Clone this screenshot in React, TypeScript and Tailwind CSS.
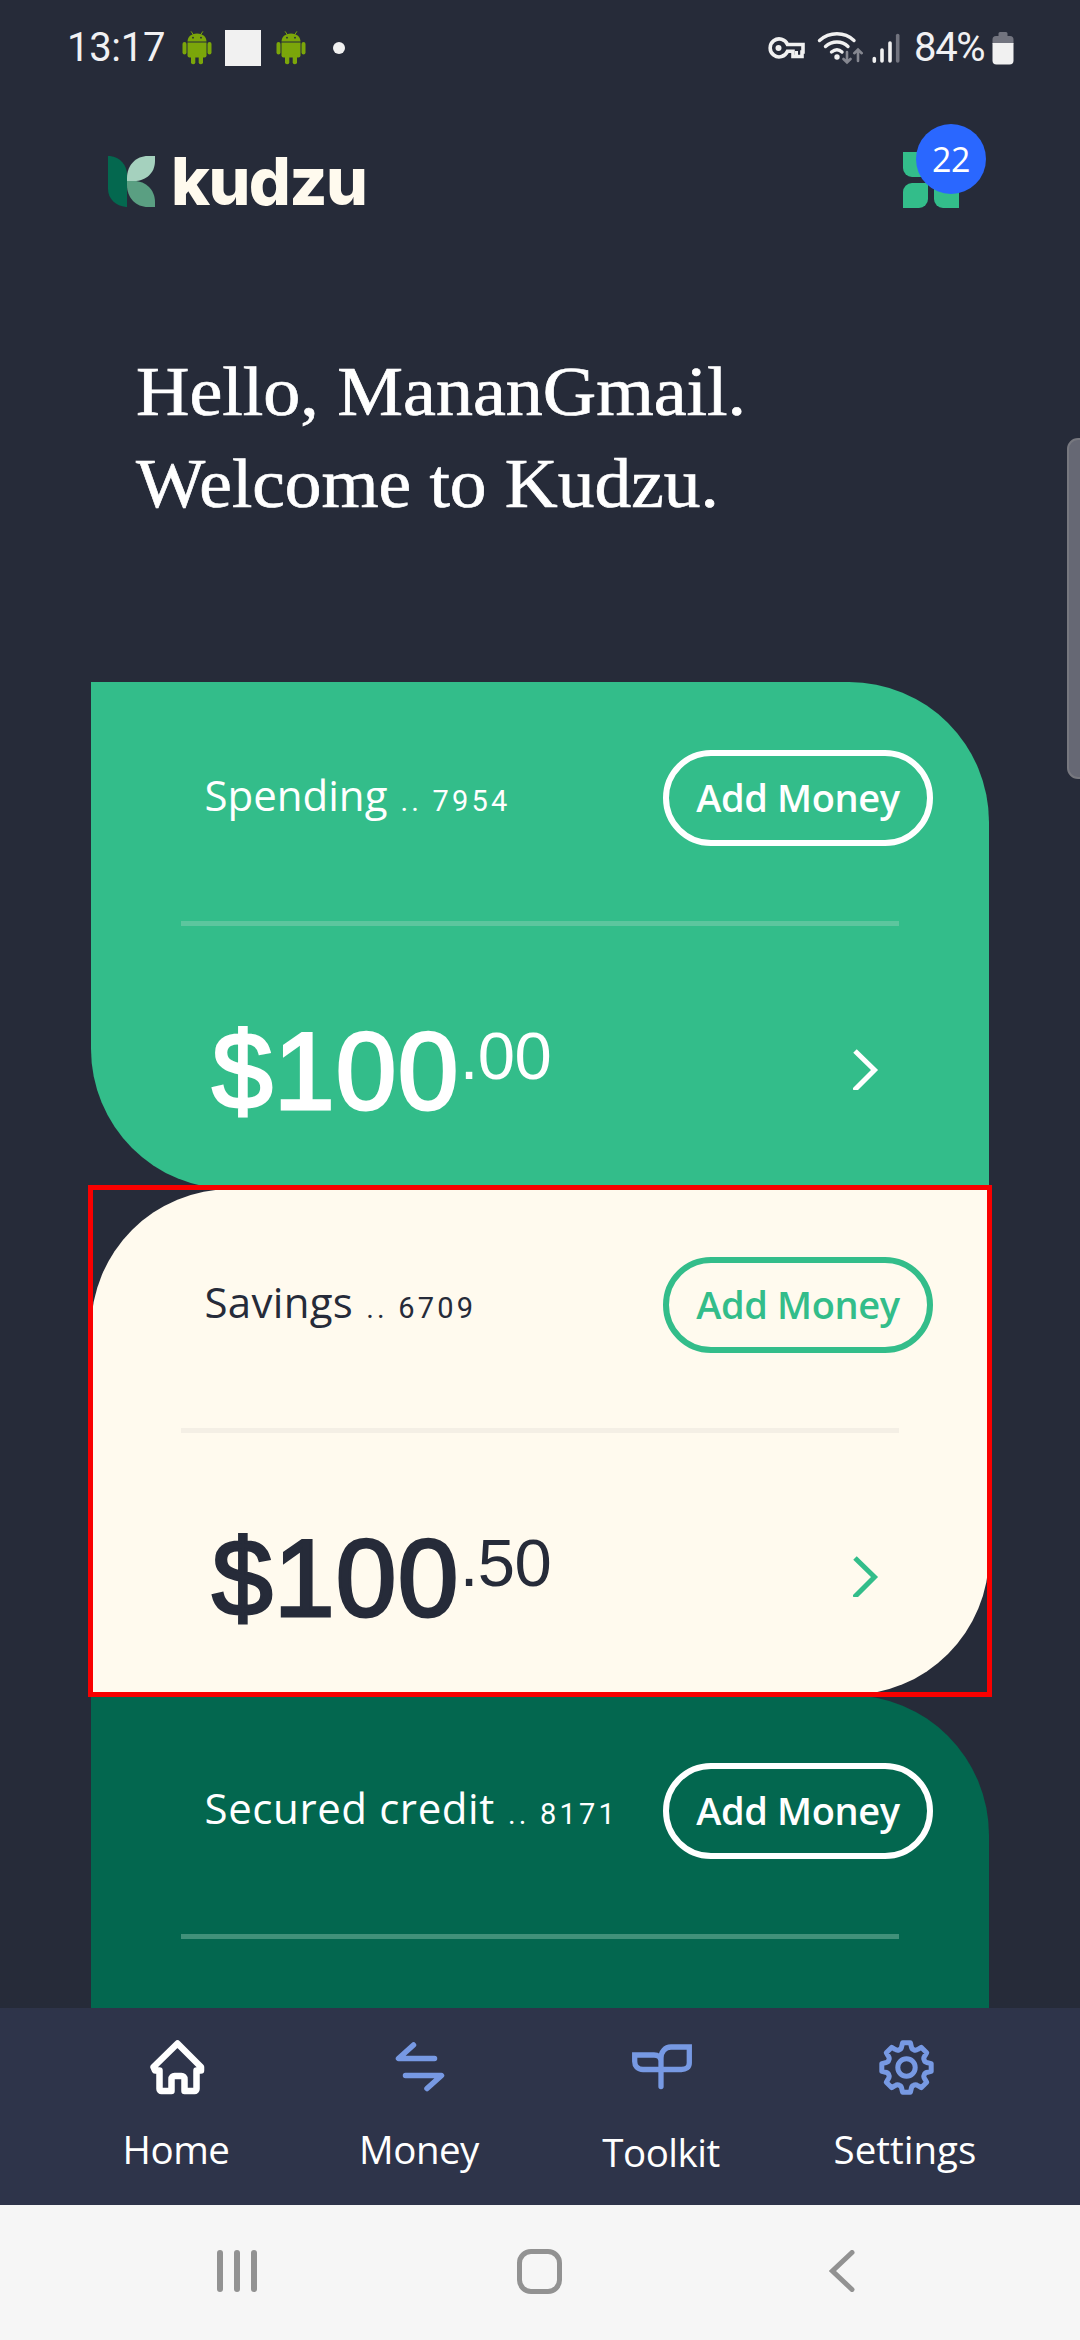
import type { ReactNode } from "react";

const sans = "font-['Open_Sans','Noto_Sans',sans-serif]";

function Android() {
  return (
    <svg width="30" height="34" viewBox="0 0 30 34" fill="#7ba60a">
      <path d="M5.5 10.5C5.5 6 9 2.4 15 2.4s9.500 3.600 9.500 8.100z" />
      <path d="M9.300.7l2 3M20.700.7l-2 3" stroke="#7ba60a" strokeWidth="1" strokeLinecap="round" />
      <circle cx="11" cy="6.700" r="0.900" fill="#262b39" />
      <circle cx="19" cy="6.700" r="0.900" fill="#262b39" />
      <rect x="0.500" y="11" width="4" height="12.500" rx="2" />
      <rect x="25.500" y="11" width="4" height="12.500" rx="2" />
      <path d="M5.500 11.500h19v13a2 2 0 0 1-2 2h-15a2 2 0 0 1-2-2z" />
      <rect x="9" y="22" width="4.300" height="11.300" rx="2" />
      <rect x="16.700" y="22" width="4.300" height="11.300" rx="2" />
    </svg>
  );
}

function StatusBar() {
  return (
    <div className="flex h-[96px] shrink-0 items-center pl-[67px] pr-[66px] font-[Roboto,sans-serif] text-[40px] leading-none text-[#f1f1f3]">
      <span className="w-[115px] tracking-[-0.300px]">13:17</span>
      <Android />
      <div className="ml-[13px] mr-[15px] size-[36px] bg-[#f1f1f1]" />
      <Android />
      <div className="ml-[27px] size-[12px] rounded-full bg-[#f1f1f1]" />
      <div className="grow" />
      <svg width="37" height="22" viewBox="0 0 37 22" fill="none" stroke="#f1f1f1">
        <path d="M19.500 7.500H35v7.500h-1v4.500h-9v-5.200h-5.500A9 9 0 1 1 19.500 7.500z" strokeWidth="3.600" />
        <path d="M28.500 14v5" strokeWidth="3" />
        <circle cx="10.500" cy="11" r="3" fill="#f1f1f1" stroke="none" />
      </svg>
      <svg className="ml-[12px]" width="46" height="34" viewBox="0 0 46 34" fill="none" strokeLinecap="round">
        <g stroke="#f1f1f1" strokeWidth="3.400">
          <path d="M2.500 9.500C12.500.500 27.500.500 37 9.500" />
          <path d="M8.500 15.500c6.500-6 16.500-6 22.500 0" />
          <path d="M14.500 21c3.500-2.800 7.500-2.800 10.500 0" />
        </g>
        <circle cx="20" cy="26" r="2.700" fill="#f1f1f1" />
        <path d="M30 21v10M26.500 28l3.500 3.500 3.500-3.500M41 30V19M37.300 22.200 41 18.600l3.700 3.600" stroke="#858790" strokeWidth="2.600" />
      </svg>
      <svg className="ml-[9px]" width="28" height="30" viewBox="0 0 28 30" strokeLinecap="round" strokeWidth="3.600">
        <path d="M2.300 25.500v2.700M10 17v11M18 10v18" stroke="#f1f1f1" />
        <path d="M25.700 2.500V28" stroke="#72747f" />
      </svg>
      <span className="ml-[14px] w-[78px] whitespace-nowrap tracking-[-1.300px]">84%</span>
      <svg width="22" height="33" viewBox="0 0 22 33">
        <path d="M6.500 1.500A1.500 1.500 0 0 1 8 0h6a1.500 1.500 0 0 1 1.500 1.500V4H18a3.500 3.500 0 0 1 3.500 3.500V12h-21V7.500A3.500 3.500 0 0 1 4 4h2.500z" fill="#72747f" />
        <path d="M.500 11h21v17.500a4 4 0 0 1-4 4h-13a4 4 0 0 1-4-4z" fill="#f1f1f1" />
      </svg>
    </div>
  );
}

function Header() {
  return (
    <header className="flex h-[171px] shrink-0 items-start pl-[108px] pr-[121px] pt-[56px]">
      <svg className="mt-[4px]" width="47" height="51" viewBox="0 0 47 51">
        <path d="M0 0h2C12 1 19 9 19 19v32h-1C8 50 0 43 0 33z" fill="#04684f" />
        <path d="M19 25V22C19 9 28 0 40 0h7v5C47 17 38 25 26 25z" fill="#a5d1be" />
        <path d="M19 25h7c12 0 21 9 21 21v5h-7C28 51 19 42 19 29z" fill="#5a9f82" />
      </svg>
      <span className="ml-[16px] font-[Inter,sans-serif] text-[66px] font-extrabold leading-[59px] tracking-[-1.600px] text-[#fffaee]">kudzu</span>
      <div className="relative ml-auto grid size-[56px] grid-cols-[25px_25px] grid-rows-[25px_25px] gap-[6px]">
        <i className="rounded-bl-[9px] rounded-tr-[9px] bg-[#33bd8a]" />
        <i className="rounded-br-[9px] rounded-tl-[9px] bg-[#33bd8a]" />
        <i className="rounded-br-[9px] rounded-tl-[9px] bg-[#33bd8a]" />
        <i className="rounded-bl-[9px] rounded-tr-[9px] bg-[#33bd8a]" />
        <span className="absolute left-[13px] top-[-28px] flex size-[70px] items-center justify-center rounded-full bg-[#2a67ff] font-['Open_Sans',sans-serif] text-[34px] leading-none tracking-[-0.500px] text-white">22</span>
      </div>
    </header>
  );
}

type CardProps = {
  name: string;
  digits: string;
  balance?: { whole: string; cents: string };
  tone: string;
  button: string;
  rule: string;
  arrow?: string;
  nameTracking: string;
};

function AccountCard({ name, digits, balance, tone, button, rule, arrow, nameTracking }: CardProps) {
  return (
    <section className={`h-[506.500px] shrink-0 pt-[68px] ${tone}`}>
      <div className="flex h-[96px] items-center justify-between pl-[113.500px] pr-[56px]">
        <div className={`flex items-baseline pb-[6px] ${sans}`}>
          <span className={`text-[42px] leading-none ${nameTracking}`}>{name}</span>
          <span className="ml-[13px] font-[Roboto,sans-serif] text-[29px] leading-none tracking-[3.200px]">.. {digits}</span>
        </div>
        <button className={`flex h-[96px] w-[270px] items-center justify-center rounded-full border-[6px] pb-[2px] text-[38px] font-semibold leading-none tracking-[-0.400px] ${sans} ${button}`}>
          Add Money
        </button>
      </div>
      <div className={`mx-[90px] mt-[75px] h-[5px] ${rule}`} />
      {balance && (
        <div className="mt-[85px] flex h-[120px] items-center pl-[121px] pr-[110px] font-['Liberation_Sans',Arial,sans-serif]">
          <span className="text-[109px] leading-[118px] tracking-[1.300px] [-webkit-text-stroke:3px_currentColor]">{balance.whole}</span>
          <span className="self-start text-[67px] leading-[90px] tracking-[-0.500px]">{balance.cents}</span>
          <svg className="mb-[3px] ml-auto" width="26" height="41" viewBox="0 0 26 41" fill="none">
            <path d="M2 2 21.500 21 1 41.500" strokeWidth="5" className={arrow} />
          </svg>
        </div>
      )}
    </section>
  );
}

function gearPath() {
  const parts: string[] = [];
  const at = (r: number, deg: number) => {
    const a = (deg * Math.PI) / 180;
    return `${(27.5 + r * Math.sin(a)).toFixed(2)} ${(27.5 - r * Math.cos(a)).toFixed(2)}`;
  };
  for (let i = 0; i < 8; i++) {
    const c = i * 45;
    parts.push(
      `${i ? "L" : "M"}${at(25, c - 9)} L${at(25, c + 9)} L${at(21.5, c + 13)} Q${at(19, c + 16)} ${at(19.2, c + 22.5)} Q${at(19, c + 29)} ${at(21.5, c + 32)}`
    );
  }
  return parts.join(" ") + "Z";
}

function Tab({ label, icon, className }: { label: string; icon: ReactNode; className: string }) {
  return (
    <div className={`flex flex-col items-center ${className}`}>
      <div className="flex h-[62px] items-center justify-center pl-[2px]">{icon}</div>
      <span className={`mt-[31px] whitespace-nowrap text-[38.500px] leading-[40px] tracking-[-0.500px] text-white ${sans}`}>{label}</span>
    </div>
  );
}

function TabBar() {
  return (
    <nav className="flex h-[197px] shrink-0 items-start bg-[#2e344a] pt-[28px]">
      <Tab
        label="Home"
        className="ml-[76px] w-[200px]"
        icon={
          <svg width="56" height="56" viewBox="0 0 56 56" fill="none" stroke="#fff" strokeWidth="6.500" strokeLinejoin="round">
            <path d="M28.500 4.500 52 28v3.500h-4.500V50a2 2 0 0 1-2 2H35.500V40a3 3 0 0 0-3-3h-7a3 3 0 0 0-3 3v12H12.500a2 2 0 0 1-2-2V31.500H6L4.500 28z" />
          </svg>
        }
      />
      <Tab
        label="Money"
        className="ml-[43px] w-[200px]"
        icon={
          <svg width="50" height="50" viewBox="0 0 50 50" fill="none" stroke="#7799e3" strokeWidth="5.500" strokeLinecap="round" strokeLinejoin="round">
            <path d="M18.500 3 3.500 16.500h36M32 46.500l14.500-13h-36" />
          </svg>
        }
      />
      <Tab
        label="Toolkit"
        className="ml-[42px] w-[200px] [&>span]:mt-[34px]"
        icon={
          <svg width="60" height="46" viewBox="0 0 60 46" fill="none" stroke="#7799e3" strokeWidth="5.300" strokeLinecap="round">
            <path d="M29 42.500V14c0-6 4-11 10-11h18.300v16c0 4.500-3.500 6.500-8 6.500H11c-5.500 0-8.300-3.500-8.300-8V11H22c4 0 7 2 7 6" />
          </svg>
        }
      />
      <Tab
        label="Settings"
        className="ml-[44px] w-[200px] [&>span]:tracking-[0px]"
        icon={
          <svg width="55" height="55" viewBox="0 0 55 55" fill="none" stroke="#7799e3" strokeWidth="5" strokeLinejoin="round">
            <path d={gearPath()} />
            <circle cx="27.500" cy="27.500" r="8.700" />
          </svg>
        }
      />
    </nav>
  );
}

function SystemNav() {
  return (
    <div className="flex h-[135px] shrink-0 items-center bg-[#f6f6f6] pb-[3px] pl-[217px]">
      <div className="flex gap-[11px]">
        <i className="h-[42px] w-[6px] rounded-full bg-[#929292]" />
        <i className="h-[42px] w-[6px] rounded-full bg-[#929292]" />
        <i className="h-[42px] w-[6px] rounded-full bg-[#929292]" />
      </div>
      <div className="ml-[260px] size-[45px] rounded-[14px] border-[5px] border-[#929292]" />
      <svg className="ml-[267px]" width="26" height="42" viewBox="0 0 26 42" fill="none">
        <path d="M23 2.500 3.500 21 23 39.500" stroke="#929292" strokeWidth="5" strokeLinecap="round" />
      </svg>
    </div>
  );
}

export default function App() {
  return (
    <div className="relative flex h-[2340px] w-[1080px] flex-col overflow-hidden bg-[#262b39]">
      <StatusBar />
      <Header />
      <h1 className="h-[415px] shrink-0 whitespace-nowrap pl-[136px] pt-[79px] font-['Liberation_Serif',serif] text-[69px] leading-[92px] text-white [-webkit-text-stroke:0.700px_white]">
        <span className="block w-[570px] origin-left scale-x-[1.072]">Hello, MananGmail.</span>
        <span className="block w-[550px] origin-left scale-x-[1.063]">Welcome to Kudzu.</span>
      </h1>
      <main className="relative flex h-[1326px] shrink-0 flex-col overflow-hidden px-[91px]">
        <AccountCard
          name="Spending" digits="7954" balance={{ whole: "$100", cents: ".00" }} nameTracking="tracking-[0px]"
          tone="rounded-tr-[140px] rounded-bl-[140px] bg-[#33bd8a] text-white"
          button="border-white text-white" rule="bg-[#5cc69e]" arrow="stroke-white"
        />
        <AccountCard
          name="Savings" digits="6709" balance={{ whole: "$100", cents: ".50" }} nameTracking="tracking-[0.300px]"
          tone="rounded-tl-[140px] rounded-br-[140px] bg-[#fffaee] text-[#262b39]"
          button="border-[#33bd8a] text-[#33bd8a]" rule="bg-[#f4efe5]" arrow="stroke-[#33bd8a]"
        />
        <AccountCard
          name="Secured credit" digits="8171" nameTracking="tracking-[0.600px]"
          tone="rounded-tr-[140px] rounded-bl-[140px] bg-[#03674f] text-white"
          button="border-white text-white" rule="bg-[#41917a]"
        />
        <div className="absolute left-[88px] top-[503px] h-[512px] w-[904px] border-[5px] border-[#f90000]" />
      </main>
      <TabBar />
      <SystemNav />
      <div className="absolute right-[-14px] top-[438px] h-[341px] w-[27px] rounded-[11px] border-2 border-[#77787f] bg-[#666874]" />
    </div>
  );
}
